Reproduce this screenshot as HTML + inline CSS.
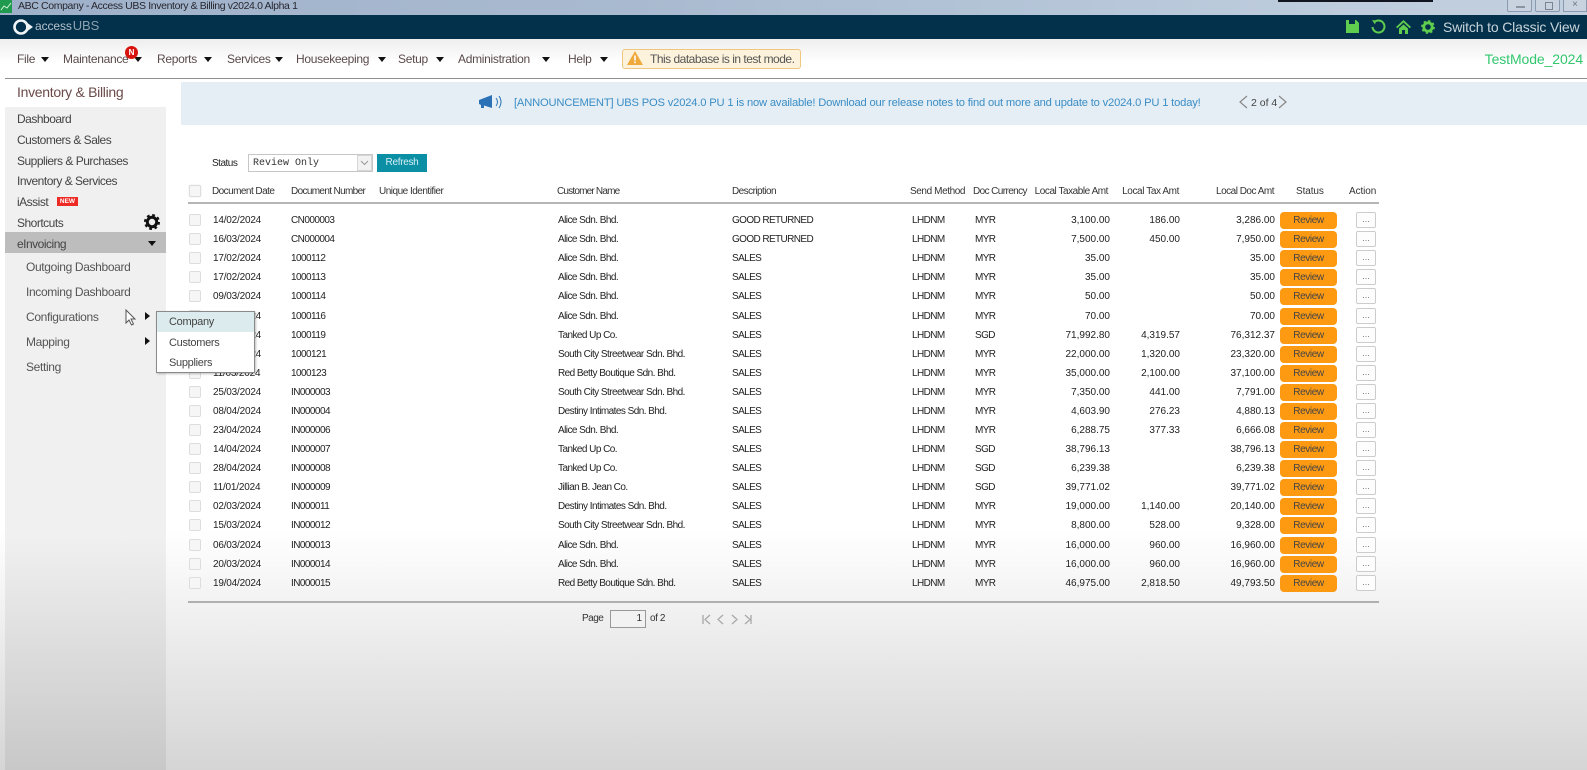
<!DOCTYPE html>
<html><head><meta charset="utf-8"><title>Access UBS</title>
<style>
html,body{margin:0;padding:0}
body{width:1587px;height:770px;overflow:hidden;position:relative;font-family:"Liberation Sans",sans-serif;background:linear-gradient(#fff 0,#fff 530px,#d5d5d5 770px)}
.a{position:absolute;white-space:nowrap}
#wrap{position:absolute;left:0;top:0;width:1587px;height:770px;filter:blur(.35px)}
.m{top:50px;line-height:19px;font-size:12px;color:#5a4a4a;letter-spacing:-.3px}
.ar{width:0;height:0;border-left:4px solid transparent;border-right:4px solid transparent;border-top:5px solid #111;top:57px}
.s{left:17px;font-size:12px;line-height:18px;color:#444;letter-spacing:-.5px}
.sub{left:26px;font-size:12px;line-height:18px;color:#555;letter-spacing:-.35px}
.h{top:183px;font-size:10px;line-height:18px;color:#333;letter-spacing:-.55px}
.cb{width:10px;height:10px;border:1px solid #ddd;border-radius:2px;background:#f6f6f6;left:189px;box-shadow:0 0 1px #ccc}
.r{position:absolute;left:0;width:1587px;height:18px;font-size:10px;line-height:18px;color:#222}
.r span,.r i,.r b{position:absolute;white-space:nowrap;font-style:normal;font-weight:normal}
.r span{top:1px}
.r i.c{left:189px;top:3px;width:10px;height:10px;border:1px solid #ddd;border-radius:2px;background:#f6f6f6}
.d{left:213px;letter-spacing:-.2px}.n{left:291px;letter-spacing:-.55px}.cu{left:558px;letter-spacing:-.55px}.de{left:732px;letter-spacing:-.6px}.l{left:912px;letter-spacing:-.6px}.y{left:975px;letter-spacing:-.6px}
.t1{right:477px}.t2{right:407px}.t3{right:312px}
.r b.b{left:1280px;top:1px;width:57px;height:17px;line-height:18px;background:#fd9a12;border-radius:4px;text-align:center;color:#444;letter-spacing:-.4px}
.r b.e{left:1356px;top:1px;width:18px;height:14px;line-height:12px;border:1px solid #ccc;border-radius:2px;background:#fdfdfd;text-align:center;color:#777;font-size:9px}
.tri{width:0;height:0;border-top:4px solid transparent;border-bottom:4px solid transparent;border-left:5px solid #111;left:145px}
.pp{line-height:16px;font-size:11px;color:#444;letter-spacing:-.3px;left:12px}
</style></head><body><div id="wrap">

<!-- title bar -->
<div class="a" style="left:0;top:0;width:1587px;height:15px;background:linear-gradient(90deg,#9fb1ca 0,#a9bad0 40%,#bccbdc 80%,#c3d0df 100%)"></div>
<svg class="a" style="left:0;top:0" width="12" height="13" viewBox="0 0 12 13"><rect width="12" height="13" fill="#1f9a4f"/><path d="M1 10L4 6l3 2 4-5" stroke="#d8f5d8" fill="none"/></svg>
<div class="a" style="left:18px;top:0;line-height:13px;font-size:10.5px;color:#26262e;letter-spacing:-.37px">ABC Company - Access UBS Inventory &amp; Billing v2024.0 Alpha 1</div>
<div class="a" style="left:1278px;top:0;width:155px;height:2px;background:#10151f"></div>
<div class="a" style="left:1507px;top:0;width:25px;height:12px;background:#c8d3df;border:1px solid #8a9ab0;border-top:0;box-sizing:border-box;border-radius:0 0 2px 2px"><div class="a" style="left:8px;top:6px;width:9px;height:2px;background:#8a94a2"></div></div>
<div class="a" style="left:1535px;top:0;width:25px;height:12px;background:#c8d3df;border:1px solid #8a9ab0;border-top:0;box-sizing:border-box;border-radius:0 0 2px 2px"><div class="a" style="left:9px;top:2px;width:6px;height:6px;border:1px solid #7a8492"></div></div>
<div class="a" style="left:1563px;top:0;width:24px;height:12px;background:#c8d3df;border:1px solid #8a9ab0;border-top:0;box-sizing:border-box;font-size:10px;line-height:10px;text-align:center;color:#6a7482">×</div>

<!-- dark bar -->
<div class="a" style="left:0;top:15px;width:1587px;height:24px;background:#03304a"></div>
<svg class="a" style="left:11px;top:17px" width="24" height="20" viewBox="0 0 24 20"><circle cx="10" cy="10" r="6.5" fill="none" stroke="#f0f4f6" stroke-width="2.6"/><path d="M15 5l7 5-7 5z" fill="#f0f4f6"/></svg>
<div class="a" style="left:35px;top:16px;line-height:20px;font-size:12px;color:#b5c2cc;letter-spacing:-.1px">access<span style="color:#8ba0ae;font-size:13px;margin-left:1px">UBS</span></div>
<svg class="a" style="left:1346px;top:20px" width="13" height="13" viewBox="0 0 13 13"><path d="M0 0h10l3 3v10H0z" fill="#5fce4e"/><rect x="3" y="0" width="6" height="4" fill="#03304a"/></svg>
<svg class="a" style="left:1370px;top:19px" width="16" height="15" viewBox="0 0 16 15"><path d="M4 3.5A6 6 0 1 1 2.5 8" fill="none" stroke="#5fce4e" stroke-width="2"/><path d="M2 1l4 .5L5 5.500z" fill="#5fce4e"/></svg>
<svg class="a" style="left:1396px;top:20px" width="15" height="14" viewBox="0 0 15 14"><path d="M7.500 0L15 7l-1.300 1.300-6.200-5.800-6.200 5.800L0 7z" fill="#5fce4e"/><path d="M3 8.500l4.500-4 4.500 4V14H9V10H6v4H3z" fill="#5fce4e"/></svg>
<svg class="a" style="left:1421px;top:20px" width="14" height="14" viewBox="0 0 14 14"><circle cx="7" cy="7" r="4.200" fill="none" stroke="#5fce4e" stroke-width="2.800"/><circle cx="7" cy="7" r="6" fill="none" stroke="#5fce4e" stroke-width="1.800" stroke-dasharray="2.300 2.400"/></svg>
<div class="a" style="left:1443px;top:17px;line-height:20px;font-size:14px;color:#c9d5dc;letter-spacing:-.15px">Switch to Classic View</div>

<!-- menu -->
<div class="a" style="left:0;top:39px;width:1587px;height:39px;background:linear-gradient(#eee,#fff 60%)"></div>
<div class="a m" style="left:17px">File</div><div class="a ar" style="left:41px"></div>
<div class="a m" style="left:63px">Maintenance</div><div class="a ar" style="left:134px"></div>
<div class="a" style="left:125px;top:46px;width:13px;height:13px;border-radius:50%;background:#d8130f;color:#fff;font-size:8px;font-weight:bold;line-height:13px;text-align:center">N</div>
<div class="a m" style="left:157px">Reports</div><div class="a ar" style="left:204px"></div>
<div class="a m" style="left:227px">Services</div><div class="a ar" style="left:275px"></div>
<div class="a m" style="left:296px">Housekeeping</div><div class="a ar" style="left:378px"></div>
<div class="a m" style="left:398px">Setup</div><div class="a ar" style="left:436px"></div>
<div class="a m" style="left:458px">Administration</div><div class="a ar" style="left:542px"></div>
<div class="a m" style="left:568px">Help</div><div class="a ar" style="left:600px"></div>
<div class="a" style="left:622px;top:49px;width:179px;height:20px;box-sizing:border-box;background:#fdf3dc;border:1px solid #efc67f;border-radius:3px"></div>
<svg class="a" style="left:627px;top:50px" width="16" height="16" viewBox="0 0 16 16"><path d="M8 1L16 15H0z" fill="#f0a93c"/><rect x="7.200" y="5.500" width="1.600" height="5" fill="#fff"/><rect x="7.200" y="11.500" width="1.600" height="1.600" fill="#fff"/></svg>
<div class="a" style="left:650px;top:50px;line-height:19px;font-size:12px;color:#555;letter-spacing:-.5px">This database is in test mode.</div>
<div class="a" style="right:4px;top:49px;line-height:20px;font-size:14px;color:#33c76f;letter-spacing:-.1px">TestMode_2024</div>
<div class="a" style="left:5px;top:78px;width:1582px;height:1px;background:#8f8f8f"></div>

<!-- sidebar -->
<div class="a" style="left:17px;top:83px;line-height:18px;font-size:14px;color:#6b4a4a;letter-spacing:-.3px">Inventory &amp; Billing</div>
<div class="a" style="left:5px;top:107px;width:161px;height:663px;background:linear-gradient(#f0f0f0 0,#f0f0f0 430px,#c8c8c8 663px)"></div>
<div class="a s" style="top:110px">Dashboard</div>
<div class="a s" style="top:131px">Customers &amp; Sales</div>
<div class="a s" style="top:152px">Suppliers &amp; Purchases</div>
<div class="a s" style="top:172px">Inventory &amp; Services</div>
<div class="a s" style="top:193px">iAssist</div>
<div class="a" style="left:57px;top:197px;width:21px;height:9px;background:#ee2a24;color:#fff;font-size:6.500px;font-weight:bold;line-height:9px;text-align:center">NEW</div>
<div class="a s" style="top:214px">Shortcuts</div>
<svg class="a" style="left:144px;top:214px" width="16" height="16" viewBox="0 0 16 16"><circle cx="8" cy="8" r="4.700" fill="none" stroke="#111" stroke-width="3"/><circle cx="8" cy="8" r="6.800" fill="none" stroke="#111" stroke-width="2.400" stroke-dasharray="2.700 2.640"/></svg>
<div class="a" style="left:5px;top:232px;width:161px;height:21px;background:#bdbdbd"></div>
<div class="a s" style="top:235px">eInvoicing</div>
<div class="a" style="left:148px;top:241px;width:0;height:0;border-left:4px solid transparent;border-right:4px solid transparent;border-top:5px solid #111"></div>
<div class="a sub" style="top:258px">Outgoing Dashboard</div>
<div class="a sub" style="top:283px">Incoming Dashboard</div>
<div class="a sub" style="top:308px">Configurations</div>
<div class="a sub" style="top:333px">Mapping</div>
<div class="a sub" style="top:358px">Setting</div>
<div class="a tri" style="top:312px"></div>
<div class="a tri" style="top:337px"></div>
<svg class="a" style="left:125px;top:309px;z-index:6" width="13" height="18" viewBox="0 0 13 18"><path d="M1 1v13l3-3 2.500 5 2-1L6 10h4z" fill="#fff" stroke="#555"/></svg>

<!-- banner -->
<div class="a" style="left:181px;top:82px;width:1406px;height:43px;background:#e4eef4"></div>
<svg class="a" style="left:478px;top:95px" width="25" height="14" viewBox="0 0 25 14"><path d="M1 5l13-5v13L6 10.500V13H3V10L1 9z" fill="#2a72b5"/><path d="M18 3q3 4 0 8M21 1q4 6 0 12" fill="none" stroke="#2a72b5" stroke-width="1"/></svg>
<div class="a" style="left:514px;top:95px;line-height:17px;font-size:11.200px;color:#3b8dc6;letter-spacing:-.18px">[ANNOUNCEMENT] UBS POS v2024.0 PU 1 is now available! Download our release notes to find out more and update to v2024.0 PU 1 today!</div>
<svg class="a" style="left:1238px;top:95px" width="11" height="14" viewBox="0 0 11 14"><path d="M9 1L2 7l7 6" fill="none" stroke="#888" stroke-width="1.200"/></svg>
<div class="a" style="left:1251px;top:95px;line-height:17px;font-size:10.500px;color:#444">2 of 4</div>
<svg class="a" style="left:1277px;top:95px" width="11" height="14" viewBox="0 0 11 14"><path d="M2 1l7 6-7 6" fill="none" stroke="#888" stroke-width="1.200"/></svg>

<!-- filter -->
<div class="a" style="left:212px;top:155px;line-height:18px;font-size:10px;color:#222;letter-spacing:-.5px">Status</div>
<div class="a" style="left:248px;top:154px;width:125px;height:18px;box-sizing:border-box;background:#fff;border:1px solid #c6c6c6;font-family:'Liberation Mono',monospace;font-size:10px;line-height:18px;color:#333;padding-left:4px">Review Only</div>
<div class="a" style="left:357px;top:155px;width:15px;height:16px;box-sizing:border-box;background:#f2f2f2;border:1px solid #d5d5d5"></div>
<svg class="a" style="left:360px;top:160px" width="9" height="6" viewBox="0 0 9 6"><path d="M1 1l3.500 3.500L8 1" fill="none" stroke="#999"/></svg>
<div class="a" style="left:377px;top:154px;width:50px;height:18px;background:#0a8fa5;color:#d8f0f4;font-size:10px;line-height:18px;text-align:center;letter-spacing:-.3px">Refresh</div>

<!-- table head -->
<div class="a cb" style="top:185px"></div>
<div class="a h" style="left:212px">Document Date</div>
<div class="a h" style="left:291px;letter-spacing:-.65px">Document Number</div>
<div class="a h" style="left:379px;letter-spacing:-.5px">Unique Identifier</div>
<div class="a h" style="left:557px;letter-spacing:-.8px">Customer Name</div>
<div class="a h" style="left:732px">Description</div>
<div class="a h" style="left:910px;letter-spacing:-.4px">Send Method</div>
<div class="a h" style="left:973px;letter-spacing:-.6px">Doc Currency</div>
<div class="a h" style="right:479px;letter-spacing:-.45px">Local Taxable Amt</div>
<div class="a h" style="right:408px;letter-spacing:-.4px">Local Tax Amt</div>
<div class="a h" style="right:313px;letter-spacing:-.5px">Local Doc Amt</div>
<div class="a h" style="left:1296px;letter-spacing:-.1px">Status</div>
<div class="a h" style="left:1349px;letter-spacing:-.1px">Action</div>
<div class="a" style="left:188px;top:202px;width:1191px;height:2px;background:#b5b5b5"></div>

<!-- rows -->
<div class="r" style="top:211px"><i class="c"></i><span class="d">14/02/2024</span><span class="n">CN000003</span><span class="cu">Alice Sdn. Bhd.</span><span class="de">GOOD RETURNED</span><span class="l">LHDNM</span><span class="y">MYR</span><span class="t1">3,100.00</span><span class="t2">186.00</span><span class="t3">3,286.00</span><b class="b">Review</b><b class="e">...</b></div>
<div class="r" style="top:230.100px"><i class="c"></i><span class="d">16/03/2024</span><span class="n">CN000004</span><span class="cu">Alice Sdn. Bhd.</span><span class="de">GOOD RETURNED</span><span class="l">LHDNM</span><span class="y">MYR</span><span class="t1">7,500.00</span><span class="t2">450.00</span><span class="t3">7,950.00</span><b class="b">Review</b><b class="e">...</b></div>
<div class="r" style="top:249.200px"><i class="c"></i><span class="d">17/02/2024</span><span class="n">1000112</span><span class="cu">Alice Sdn. Bhd.</span><span class="de">SALES</span><span class="l">LHDNM</span><span class="y">MYR</span><span class="t1">35.00</span><span class="t3">35.00</span><b class="b">Review</b><b class="e">...</b></div>
<div class="r" style="top:268.300px"><i class="c"></i><span class="d">17/02/2024</span><span class="n">1000113</span><span class="cu">Alice Sdn. Bhd.</span><span class="de">SALES</span><span class="l">LHDNM</span><span class="y">MYR</span><span class="t1">35.00</span><span class="t3">35.00</span><b class="b">Review</b><b class="e">...</b></div>
<div class="r" style="top:287.400px"><i class="c"></i><span class="d">09/03/2024</span><span class="n">1000114</span><span class="cu">Alice Sdn. Bhd.</span><span class="de">SALES</span><span class="l">LHDNM</span><span class="y">MYR</span><span class="t1">50.00</span><span class="t3">50.00</span><b class="b">Review</b><b class="e">...</b></div>
<div class="r" style="top:306.500px"><i class="c"></i><span class="d">12/03/2024</span><span class="n">1000116</span><span class="cu">Alice Sdn. Bhd.</span><span class="de">SALES</span><span class="l">LHDNM</span><span class="y">MYR</span><span class="t1">70.00</span><span class="t3">70.00</span><b class="b">Review</b><b class="e">...</b></div>
<div class="r" style="top:325.500px"><i class="c"></i><span class="d">12/03/2024</span><span class="n">1000119</span><span class="cu">Tanked Up Co.</span><span class="de">SALES</span><span class="l">LHDNM</span><span class="y">SGD</span><span class="t1">71,992.80</span><span class="t2">4,319.57</span><span class="t3">76,312.37</span><b class="b">Review</b><b class="e">...</b></div>
<div class="r" style="top:344.600px"><i class="c"></i><span class="d">12/03/2024</span><span class="n">1000121</span><span class="cu">South City Streetwear Sdn. Bhd.</span><span class="de">SALES</span><span class="l">LHDNM</span><span class="y">MYR</span><span class="t1">22,000.00</span><span class="t2">1,320.00</span><span class="t3">23,320.00</span><b class="b">Review</b><b class="e">...</b></div>
<div class="r" style="top:363.700px"><i class="c"></i><span class="d">11/03/2024</span><span class="n">1000123</span><span class="cu">Red Betty Boutique Sdn. Bhd.</span><span class="de">SALES</span><span class="l">LHDNM</span><span class="y">MYR</span><span class="t1">35,000.00</span><span class="t2">2,100.00</span><span class="t3">37,100.00</span><b class="b">Review</b><b class="e">...</b></div>
<div class="r" style="top:382.800px"><i class="c"></i><span class="d">25/03/2024</span><span class="n">IN000003</span><span class="cu">South City Streetwear Sdn. Bhd.</span><span class="de">SALES</span><span class="l">LHDNM</span><span class="y">MYR</span><span class="t1">7,350.00</span><span class="t2">441.00</span><span class="t3">7,791.00</span><b class="b">Review</b><b class="e">...</b></div>
<div class="r" style="top:401.900px"><i class="c"></i><span class="d">08/04/2024</span><span class="n">IN000004</span><span class="cu">Destiny Intimates Sdn. Bhd.</span><span class="de">SALES</span><span class="l">LHDNM</span><span class="y">MYR</span><span class="t1">4,603.90</span><span class="t2">276.23</span><span class="t3">4,880.13</span><b class="b">Review</b><b class="e">...</b></div>
<div class="r" style="top:421px"><i class="c"></i><span class="d">23/04/2024</span><span class="n">IN000006</span><span class="cu">Alice Sdn. Bhd.</span><span class="de">SALES</span><span class="l">LHDNM</span><span class="y">MYR</span><span class="t1">6,288.75</span><span class="t2">377.33</span><span class="t3">6,666.08</span><b class="b">Review</b><b class="e">...</b></div>
<div class="r" style="top:440.100px"><i class="c"></i><span class="d">14/04/2024</span><span class="n">IN000007</span><span class="cu">Tanked Up Co.</span><span class="de">SALES</span><span class="l">LHDNM</span><span class="y">SGD</span><span class="t1">38,796.13</span><span class="t3">38,796.13</span><b class="b">Review</b><b class="e">...</b></div>
<div class="r" style="top:459.200px"><i class="c"></i><span class="d">28/04/2024</span><span class="n">IN000008</span><span class="cu">Tanked Up Co.</span><span class="de">SALES</span><span class="l">LHDNM</span><span class="y">SGD</span><span class="t1">6,239.38</span><span class="t3">6,239.38</span><b class="b">Review</b><b class="e">...</b></div>
<div class="r" style="top:478.300px"><i class="c"></i><span class="d">11/01/2024</span><span class="n">IN000009</span><span class="cu">Jillian B. Jean Co.</span><span class="de">SALES</span><span class="l">LHDNM</span><span class="y">SGD</span><span class="t1">39,771.02</span><span class="t3">39,771.02</span><b class="b">Review</b><b class="e">...</b></div>
<div class="r" style="top:497.400px"><i class="c"></i><span class="d">02/03/2024</span><span class="n">IN000011</span><span class="cu">Destiny Intimates Sdn. Bhd.</span><span class="de">SALES</span><span class="l">LHDNM</span><span class="y">MYR</span><span class="t1">19,000.00</span><span class="t2">1,140.00</span><span class="t3">20,140.00</span><b class="b">Review</b><b class="e">...</b></div>
<div class="r" style="top:516.400px"><i class="c"></i><span class="d">15/03/2024</span><span class="n">IN000012</span><span class="cu">South City Streetwear Sdn. Bhd.</span><span class="de">SALES</span><span class="l">LHDNM</span><span class="y">MYR</span><span class="t1">8,800.00</span><span class="t2">528.00</span><span class="t3">9,328.00</span><b class="b">Review</b><b class="e">...</b></div>
<div class="r" style="top:535.500px"><i class="c"></i><span class="d">06/03/2024</span><span class="n">IN000013</span><span class="cu">Alice Sdn. Bhd.</span><span class="de">SALES</span><span class="l">LHDNM</span><span class="y">MYR</span><span class="t1">16,000.00</span><span class="t2">960.00</span><span class="t3">16,960.00</span><b class="b">Review</b><b class="e">...</b></div>
<div class="r" style="top:554.600px"><i class="c"></i><span class="d">20/03/2024</span><span class="n">IN000014</span><span class="cu">Alice Sdn. Bhd.</span><span class="de">SALES</span><span class="l">LHDNM</span><span class="y">MYR</span><span class="t1">16,000.00</span><span class="t2">960.00</span><span class="t3">16,960.00</span><b class="b">Review</b><b class="e">...</b></div>
<div class="r" style="top:573.700px"><i class="c"></i><span class="d">19/04/2024</span><span class="n">IN000015</span><span class="cu">Red Betty Boutique Sdn. Bhd.</span><span class="de">SALES</span><span class="l">LHDNM</span><span class="y">MYR</span><span class="t1">46,975.00</span><span class="t2">2,818.50</span><span class="t3">49,793.50</span><b class="b">Review</b><b class="e">...</b></div>

<div class="a" style="left:188px;top:601px;width:1191px;height:2px;background:#b0b0b0"></div>

<!-- pagination -->
<div class="a" style="left:582px;top:610px;line-height:18px;font-size:10px;color:#333;letter-spacing:-.5px">Page</div>
<div class="a" style="left:610px;top:610px;width:36px;height:18px;box-sizing:border-box;border:1px solid #999;background:#f2f2f2;font-size:10px;line-height:16px;text-align:right;padding-right:3px;color:#333">1</div>
<div class="a" style="left:650px;top:610px;line-height:18px;font-size:10px;color:#333;letter-spacing:-.4px">of 2</div>
<svg class="a" style="left:702px;top:613px" width="50" height="13" viewBox="0 0 50 13"><g fill="none" stroke="#a8a8a8" stroke-width="1.300"><path d="M1 2v9M8 2L3 6.500 8 11M21 2l-5 4.500L21 11M30 2l5 4.500L30 11M43 2l5 4.500L43 11M49 2v9"/></g></svg>

<!-- popup -->
<div class="a" style="left:156px;top:311px;width:99px;height:62px;box-sizing:border-box;background:#fff;border:1px solid #8a8a8a;box-shadow:1px 1px 2px rgba(0,0,0,.25);z-index:5">
<div style="position:absolute;left:0;top:0;width:97px;height:20px;background:#dcecee"></div>
<div class="a pp" style="top:2px">Company</div>
<div class="a pp" style="top:23px">Customers</div>
<div class="a pp" style="top:43px">Suppliers</div>
</div>
</div></body></html>
